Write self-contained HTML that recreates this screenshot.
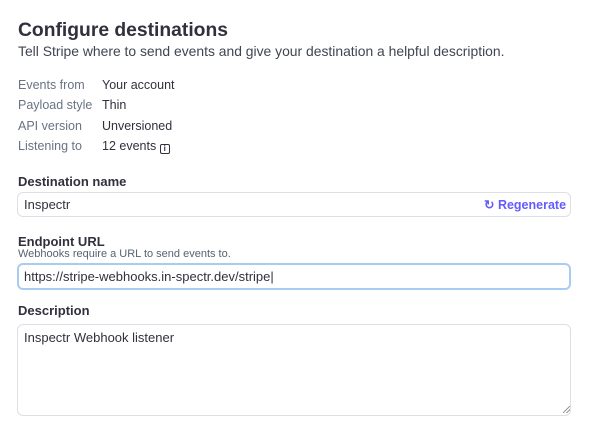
<!DOCTYPE html>
<html><head><style>
body{margin:0;width:600px;height:445px;background:#fff;font-family:"Liberation Sans",sans-serif;color:#30313d;position:relative;overflow:hidden}
.a{position:absolute;white-space:nowrap}
.k{color:#687385;font-size:12.5px}
.v{font-size:12.5px;color:#30313d}
.lab{font-weight:bold;font-size:13px;color:#30313d}
.box{position:absolute;left:17px;width:554px;border:1px solid #dcdfe4;border-radius:6px;box-sizing:border-box}
</style></head><body>
<div class="a" style="left:18px;top:20px;font-size:19.3px;font-weight:bold;color:#30313d">Configure destinations</div>
<div class="a" style="left:18px;top:43px;font-size:13.9px;color:#414552">Tell Stripe where to send events and give your destination a helpful description.</div>
<div class="a k" style="left:18px;top:78px">Events from</div><div class="a v" style="left:102px;top:78px">Your account</div>
<div class="a k" style="left:18px;top:98px">Payload style</div><div class="a v" style="left:102px;top:98px">Thin</div>
<div class="a k" style="left:18px;top:119px">API version</div><div class="a v" style="left:102px;top:119px">Unversioned</div>
<div class="a k" style="left:18px;top:139px">Listening to</div><div class="a v" style="left:102px;top:139px">12 events <span style="display:inline-block;width:8px;height:8px;border:1.3px solid #30313d;border-radius:2px;vertical-align:-1px;font-size:8px;line-height:8px;text-align:center;font-weight:bold">i</span></div>
<div class="a lab" style="left:18px;top:174px">Destination name</div>
<div class="box" style="top:192px;height:25px"></div>
<div class="a v" style="left:24px;top:197px;font-size:13px">Inspectr</div>
<div class="a" style="left:484px;top:197px;font-size:12.5px;font-weight:bold;color:#635bff">&#8635; Regenerate</div>
<div class="a lab" style="left:18px;top:234px">Endpoint URL</div>
<div class="a" style="left:18px;top:248px;font-size:11px;color:#596171">Webhooks require a URL to send events to.</div>
<div class="box" style="top:263px;height:27px;border:2px solid #a9cdf0"></div>
<div class="a v" style="left:24px;top:269px;font-size:13px">https://stripe-webhooks.in-spectr.dev/stripe|</div>
<div class="a lab" style="left:18px;top:303px">Description</div>
<div class="box" style="top:324px;height:92px"></div>
<div class="a v" style="left:24px;top:330px;font-size:13px">Inspectr Webhook listener</div>
<div class="a" style="left:563px;top:406px;width:7px;height:7px;background:linear-gradient(135deg,transparent 45%,#999 45%,#999 55%,transparent 55%,transparent 70%,#999 70%,#999 80%,transparent 80%)"></div>
</body></html>
